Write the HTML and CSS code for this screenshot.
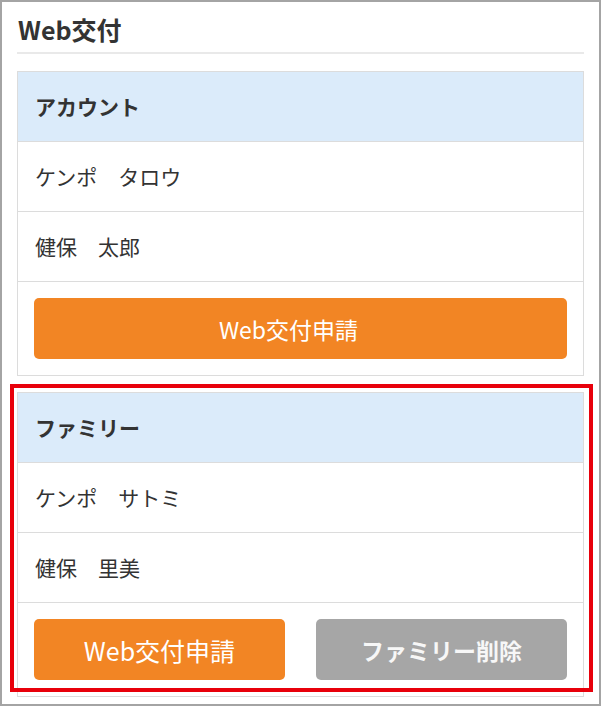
FILE: index.html
```html
<!DOCTYPE html>
<html lang="ja">
<head>
<meta charset="utf-8">
<link rel="stylesheet" href="styles.css">
</head>
<body>
<div class="frame">
  <h1 class="title">Web交付</h1>
  <div class="cards">
    <section class="card">
      <div class="card-head">アカウント</div>
      <div class="row">ケンポ　タロウ</div>
      <div class="row">健保　太郎</div>
      <div class="actions">
        <button class="btn btn-orange btn-wide">Web交付申請</button>
      </div>
    </section>
    <section class="card">
      <div class="card-head">ファミリー</div>
      <div class="row">ケンポ　サトミ</div>
      <div class="row">健保　里美</div>
      <div class="actions actions-split">
        <button class="btn btn-orange btn-big">Web交付申請</button>
        <button class="btn btn-gray">ファミリー削除</button>
      </div>
    </section>
  </div>
  <div class="highlight"></div>
</div>
</body>
</html>
```

FILE: styles.css
```css
html, body {
  margin: 0;
  padding: 0;
  background: #fff;
}
body {
  font-family: "Noto Sans CJK JP", "Noto Sans", sans-serif;
  color: #333;
}
.frame {
  position: relative;
  width: 601px;
  height: 706px;
  box-sizing: border-box;
  border: 2px solid #a4a4a4;
  padding: 0 15px;
  overflow: hidden;
}
.title {
  margin: 0;
  height: 50px;
  box-sizing: content-box;
  padding-left: 1px;
  font-size: 25px;
  font-weight: 700;
  line-height: 54px;
  color: #333;
  border-bottom: 2px solid #e9e9e9;
}
.cards {
  margin-top: 17px;
  display: flex;
  flex-direction: column;
  gap: 16px;
}
.card {
  border: 1px solid #dcdcdc;
  background: #fff;
}
.card-head {
  height: 69px;
  border-bottom: 1px solid #dcdcdc;
  background: #dbebfa;
  padding-left: 17px;
  font-size: 21px;
  font-weight: 700;
  line-height: 69px;
  color: #333;
}
.row {
  height: 69px;
  border-bottom: 1px solid #dcdcdc;
  padding-left: 17px;
  font-size: 21px;
  line-height: 69px;
  color: #333;
}
.actions {
  padding: 16px;
  display: flex;
}
.actions-split {
  gap: 31px;
}
.btn {
  height: 61px;
  border: none;
  border-radius: 5px;
  font-family: "Noto Sans CJK JP", "Noto Sans", sans-serif;
  color: #fff;
  padding: 0;
  cursor: pointer;
}
.btn-wide {
  flex: 1;
  font-size: 23px;
  padding-right: 24px;
}
.btn-big {
  flex: 1;
  font-size: 25px;
}
.btn-orange {
  background: #f28524;
}
.btn-gray {
  flex: 1;
  background: #a6a6a6;
  color: #f7f7f7;
  font-size: 23px;
  font-weight: 700;
}
.highlight {
  position: absolute;
  left: 8px;
  top: 382px;
  width: 583px;
  height: 308px;
  box-sizing: border-box;
  border: 4px solid #e8000b;
  pointer-events: none;
}
```
